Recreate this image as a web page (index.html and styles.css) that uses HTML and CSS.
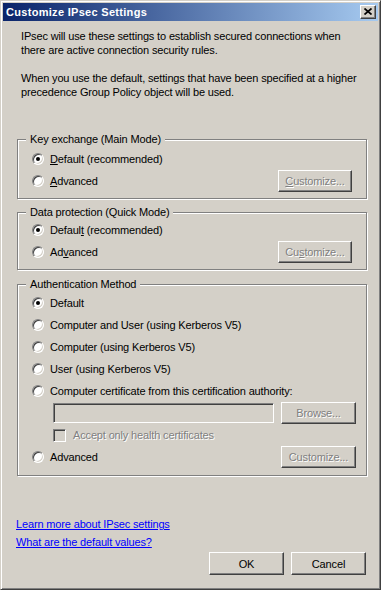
FILE: index.html
```html
<!DOCTYPE html>
<html>
<head>
<meta charset="utf-8">
<link rel="stylesheet" href="styles.css">
</head>
<body>
<div class="window">
  <div class="titlebar">
    <span class="title">Customize IPsec Settings</span>
    <span class="close"><svg width="8" height="7" viewBox="0 0 8 7"><path d="M0.5 0.5 L7.5 6.5 M7.5 0.5 L0.5 6.5" stroke="#000" stroke-width="1.7" fill="none"/></svg></span>
  </div>
  <div class="content">
    <p class="intro">IPsec will use these settings to establish secured connections when<br>there are active connection security rules.</p>
    <p class="intro second">When you use the default, settings that have been specified at a higher<br>precedence Group Policy object will be used.</p>

    <div class="group g1">
      <span class="legend">Key exchange (Main Mode)</span>
      <div class="row"><span class="radio checked"></span><span class="label"><u>D</u>efault (recommended)</span></div>
      <div class="row"><span class="radio"></span><span class="label"><u>A</u>dvanced</span><span class="btn disabled"><u>C</u>ustomize...</span></div>
    </div>

    <div class="group g2">
      <span class="legend">Data protection (Quick Mode)</span>
      <div class="row"><span class="radio checked"></span><span class="label">Defaul<u>t</u> (recommended)</span></div>
      <div class="row"><span class="radio"></span><span class="label">Ad<u>v</u>anced</span><span class="btn disabled">Cu<u>s</u>tomize...</span></div>
    </div>

    <div class="group g3">
      <span class="legend">Authentication Method</span>
      <div class="row"><span class="radio checked"></span><span class="label">Default</span></div>
      <div class="row"><span class="radio"></span><span class="label">Computer and User (using Kerberos V5)</span></div>
      <div class="row"><span class="radio"></span><span class="label">Computer (using Kerberos V5)</span></div>
      <div class="row"><span class="radio"></span><span class="label">User (using Kerberos V5)</span></div>
      <div class="row"><span class="radio"></span><span class="label">Computer certificate from this certification authority:</span></div>
      <div class="row indent"><span class="textbox"></span><span class="btn disabled wide">Browse...</span></div>
      <div class="row indent"><span class="checkbox"></span><span class="label dim">Accept only health certificates</span></div>
      <div class="row"><span class="radio"></span><span class="label">Advanced</span><span class="btn disabled wide">Customize...</span></div>
    </div>
  </div>
  <div class="footer">
    <div class="links">
      <a class="link">Learn more about IPsec settings</a>
      <a class="link">What are the default values?</a>
    </div>
    <div class="buttons">
      <span class="btn">OK</span>
      <span class="btn">Cancel</span>
    </div>
  </div>
</div>
</body>
</html>
```

FILE: styles.css
```css
html, body {
  margin: 0;
  padding: 0;
  background: #d4d0c8;
}

.window {
  width: 381px;
  height: 590px;
  box-sizing: border-box;
  background: #d4d0c8;
  border: 1px solid;
  border-color: #d4d0c8 #404040 #404040 #d4d0c8;
  box-shadow: inset 1px 1px 0 #ffffff, inset -1px -1px 0 #808080;
  padding: 2px;
  display: flex;
  flex-direction: column;
  font-family: "Liberation Sans", Arial, sans-serif;
  font-size: 11px;
  letter-spacing: -0.15px;
  color: #000;
}

.titlebar {
  height: 18px;
  flex: none;
  background: linear-gradient(to right, #0a246a, #a6caf0);
  display: flex;
  align-items: center;
  justify-content: space-between;
  padding: 0 2px 0 3px;
}

.title {
  color: #fff;
  font-weight: bold;
  font-size: 11px;
  letter-spacing: 0.3px;
}

.close {
  width: 16px;
  height: 14px;
  box-sizing: border-box;
  background: #d4d0c8;
  border: 1px solid;
  border-color: #ffffff #404040 #404040 #ffffff;
  box-shadow: inset -1px -1px 0 #808080;
  display: flex;
  align-items: center;
  justify-content: center;
  padding: 0 1px 1px 0;
}

.close svg { display: block; }

.content {
  flex: 1;
}

.intro {
  margin: 8px 0 0 18px;
  line-height: 14px;
}

.intro.second {
  margin-top: 14px;
}

.group {
  position: relative;
  margin: 0 11px 0 14px;
  border: 1px solid #808080;
  box-shadow: inset 1px 1px 0 #ffffff, 1px 1px 0 #ffffff;
  padding: 0 14px 0 14px;
}

.g1 { margin-top: 40px; padding-top: 8px; padding-bottom: 6px; }
.g2 { margin-top: 13px; padding-top: 6px; padding-bottom: 6px; }
.g3 { margin-top: 14px; padding-top: 7px; padding-bottom: 7px; padding-right: 10px; }

.legend {
  position: absolute;
  top: -8px;
  left: 8px;
  padding: 0 4px;
  background: #d4d0c8;
  line-height: 14px;
}

.row {
  display: flex;
  align-items: center;
  height: 22px;
}

.row.indent {
  padding-left: 21px;
}

.radio {
  width: 12px;
  height: 12px;
  box-sizing: border-box;
  border-radius: 50%;
  border: 1px solid;
  border-color: #808080 #ffffff #ffffff #808080;
  box-shadow: inset 1px 1px 0 #404040, inset -1px -1px 0 #d4d0c8;
  background: #ffffff;
  position: relative;
  flex: none;
}

.radio.checked::after {
  content: "";
  position: absolute;
  left: 3px;
  top: 3px;
  width: 4px;
  height: 4px;
  border-radius: 50%;
  background: #000;
}

.label {
  margin-left: 6px;
  white-space: nowrap;
}

.label.dim {
  margin-left: 7px;
  color: #808080;
  text-shadow: 1px 1px 0 #ffffff;
}

.btn {
  width: 74px;
  height: 22px;
  box-sizing: border-box;
  background: #d4d0c8;
  border: 1px solid;
  border-color: #ffffff #404040 #404040 #ffffff;
  box-shadow: inset -1px -1px 0 #808080;
  display: flex;
  align-items: center;
  justify-content: center;
  flex: none;
}

.row .btn {
  margin-left: auto;
}

.btn.wide {
  width: 75px;
}

.btn.disabled {
  color: #808080;
  text-shadow: 1px 1px 0 #ffffff;
}

.textbox {
  width: 221px;
  height: 20px;
  box-sizing: border-box;
  border: 1px solid;
  border-color: #808080 #ffffff #ffffff #808080;
  box-shadow: inset 1px 1px 0 #404040, inset -1px -1px 0 #d4d0c8;
  background: #d4d0c8;
  flex: none;
}

.checkbox {
  width: 13px;
  height: 13px;
  box-sizing: border-box;
  border: 1px solid;
  border-color: #808080 #ffffff #ffffff #808080;
  box-shadow: inset 1px 1px 0 #404040, inset -1px -1px 0 #d4d0c8;
  background: #d4d0c8;
  flex: none;
}

.footer {
  display: flex;
  justify-content: space-between;
  align-items: flex-end;
  padding: 0 12px 12px 13px;
}

.links {
  display: flex;
  flex-direction: column;
  margin-bottom: 24px;
}

.link {
  color: #0000ff;
  text-decoration: underline;
  line-height: 18px;
}

.buttons {
  display: flex;
  gap: 7px;
}

.buttons .btn {
  width: 75px;
  height: 23px;
}
```
